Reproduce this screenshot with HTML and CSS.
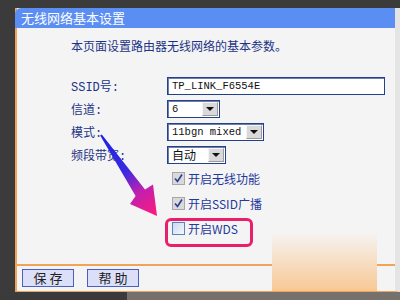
FILE: index.html
```html
<!DOCTYPE html>
<html lang="zh-CN">
<head>
  <meta charset="UTF-8">
  <title>无线网络基本设置</title>
  <link rel="stylesheet" href="styles.css">
</head>
<body>

<div class="screen">
  <div class="panel">
    <div class="title">无线网络基本设置</div>

    <div class="content">
      <p class="intro">本页面设置路由器无线网络的基本参数。</p>

      <div class="form">
        <span class="label">SSID号:</span>
        <div class="field"><span class="input ssid">TP_LINK_F6554E</span></div>

        <span class="label">信道:</span>
        <div class="field"><span class="select w-channel"><span class="value">6</span><span class="drop"></span></span></div>

        <span class="label">模式:</span>
        <div class="field"><span class="select w-mode"><span class="value">11bgn mixed</span><span class="drop"></span></span></div>

        <span class="label">频段带宽:</span>
        <div class="field"><span class="select w-band"><span class="value cn">自动</span><span class="drop"></span></span></div>
      </div>

      <div class="checks">
        <div class="check">
          <span class="box checked">
            <svg width="11" height="11" viewBox="0 0 11 11"><path d="M2 5.5 L4.5 8.5 L9 1.5" fill="none" stroke="#2b3d8f" stroke-width="1.6"/></svg>
          </span>
          <span>开启无线功能</span>
        </div>
        <div class="check">
          <span class="box checked">
            <svg width="11" height="11" viewBox="0 0 11 11"><path d="M2 5.5 L4.5 8.5 L9 1.5" fill="none" stroke="#2b3d8f" stroke-width="1.6"/></svg>
          </span>
          <span>开启SSID广播</span>
        </div>
        <div class="check wds">
          <span class="box"></span>
          <span>开启WDS</span>
          <span class="mark"></span>
        </div>
      </div>
    </div>

    <div class="footer">
      <button class="btn">保 存</button>
      <button class="btn">帮 助</button>
    </div>
  </div>
  <div class="bottom"></div>

  <!-- 标注箭头 -->
  <svg class="arrow" width="400" height="300" viewBox="0 0 400 300">
    <defs>
      <linearGradient id="arrowGrad" x1="101" y1="135" x2="156" y2="216" gradientUnits="userSpaceOnUse">
        <stop offset="0" stop-color="#1a22e8"/>
        <stop offset="0.45" stop-color="#3a2ae0"/>
        <stop offset="0.7" stop-color="#c020b0"/>
        <stop offset="1" stop-color="#ff1a7a"/>
      </linearGradient>
    </defs>
    <polygon points="101.8,134.4 145,189.5 153,184.5 157,216 130,204 135.6,196 100.2,135.6" fill="url(#arrowGrad)"/>
  </svg>

  <div class="glare"></div>
</div>

</body>
</html>
```

FILE: styles.css
```css
body {
    margin: 0;
    background-color: #3b3b3b;
    font-family: "Liberation Mono", "Noto Sans CJK SC", monospace;
}

.screen {
    position: relative;
    width: 400px;
    height: 300px;
    overflow: hidden;
    padding-top: 8px;
    box-sizing: border-box;
}

.panel {
    margin-left: 15px;
    width: 378px;
    border-left: 2px solid #f0a45a;
    border-right: 5px solid #e4e4e4;
    border-bottom: 1px solid #f0a45a;
    background-color: #f5f4f4;
}

.title {
    height: 20px;
    line-height: 20px;
    background-color: #5b8ef3;
    border-top-left-radius: 6px;
    color: white;
    font-family: "Noto Sans CJK SC", sans-serif;
    font-size: 13px;
    padding-left: 6px;
    margin-left: -2px;
}

.content {
    padding: 10px 0 23px 54px;
    color: #1b3488;
    font-size: 12px;
}

.intro {
    margin: 0;
    line-height: 16px;
    font-family: "Noto Sans CJK SC", sans-serif;
}

.form {
    margin-top: 20px;
    display: grid;
    grid-template-columns: 96px auto;
    grid-auto-rows: 23px;
    align-items: center;
}

.label {
    font-size: 12px;
}

.field {
    display: flex;
    align-items: center;
}

.input,
.select {
    height: 18px;
    box-sizing: border-box;
    border: 1px solid #23408c;
    box-shadow: inset 1px 1px 0 #6f7fa8;
    background-color: white;
    color: #111;
    display: flex;
    align-items: center;
    font-size: 10.5px;
}

.input {
    width: 218px;
    padding-left: 4px;
}

.select .value {
    flex: 1;
    padding-left: 4px;
}

.select .value.cn {
    font-family: "Noto Sans CJK SC", sans-serif;
    font-size: 12px;
}

.w-channel { width: 53px; }
.w-mode { width: 97px; }
.w-band { width: 59px; }

.drop {
    width: 16px;
    height: 14px;
    margin-right: 1px;
    background-color: #d9d9d9;
    border: 1px solid #f4f4f4;
    border-right-color: #9a9a9a;
    border-bottom-color: #9a9a9a;
    box-sizing: border-box;
    display: flex;
    align-items: center;
    justify-content: center;
}

.drop::after {
    content: "";
    border-left: 4px solid transparent;
    border-right: 4px solid transparent;
    border-top: 4px solid #111;
}

.checks {
    padding-left: 101px;
}

.check {
    position: relative;
    height: 25px;
    display: flex;
    align-items: center;
    gap: 3px;
    font-family: "Noto Sans CJK SC", sans-serif;
    font-size: 12px;
    color: #1d3a9c;
}

.box {
    width: 13px;
    height: 13px;
    box-sizing: border-box;
    border: 1px solid #5f84bb;
    background: linear-gradient(135deg, #c9dbf2, #f4f8fd);
    display: flex;
    align-items: center;
    justify-content: center;
}

.box.checked {
    border-color: #a7a7a7;
    background: #d9d9d9;
}

.mark {
    position: absolute;
    left: -7px;
    top: 2px;
    width: 88px;
    height: 29px;
    box-sizing: border-box;
    border: 3px solid #ea1f6c;
    border-radius: 6px;
}

.footer {
    border-top: 2px solid #f0a45a;
    padding: 3px 5px 4px;
    display: flex;
    gap: 13px;
}

.btn {
    width: 52px;
    height: 18px;
    padding: 0;
    border: 1px solid #4b5fc2;
    background-color: #dcdff8;
    color: #222;
    font-family: "Noto Sans CJK SC", sans-serif;
    font-size: 13px;
    line-height: 14px;
}

.bottom {
    height: 10px;
    background: linear-gradient(to right, #3b3b3b 127px, #76716c 127px);
}

.arrow {
    position: absolute;
    left: 0;
    top: 0;
}

.glare {
    position: absolute;
    left: 272px;
    top: 232px;
    width: 105px;
    height: 59px;
    background: linear-gradient(to bottom, #f5f4f3, #f8c894);
}
```
